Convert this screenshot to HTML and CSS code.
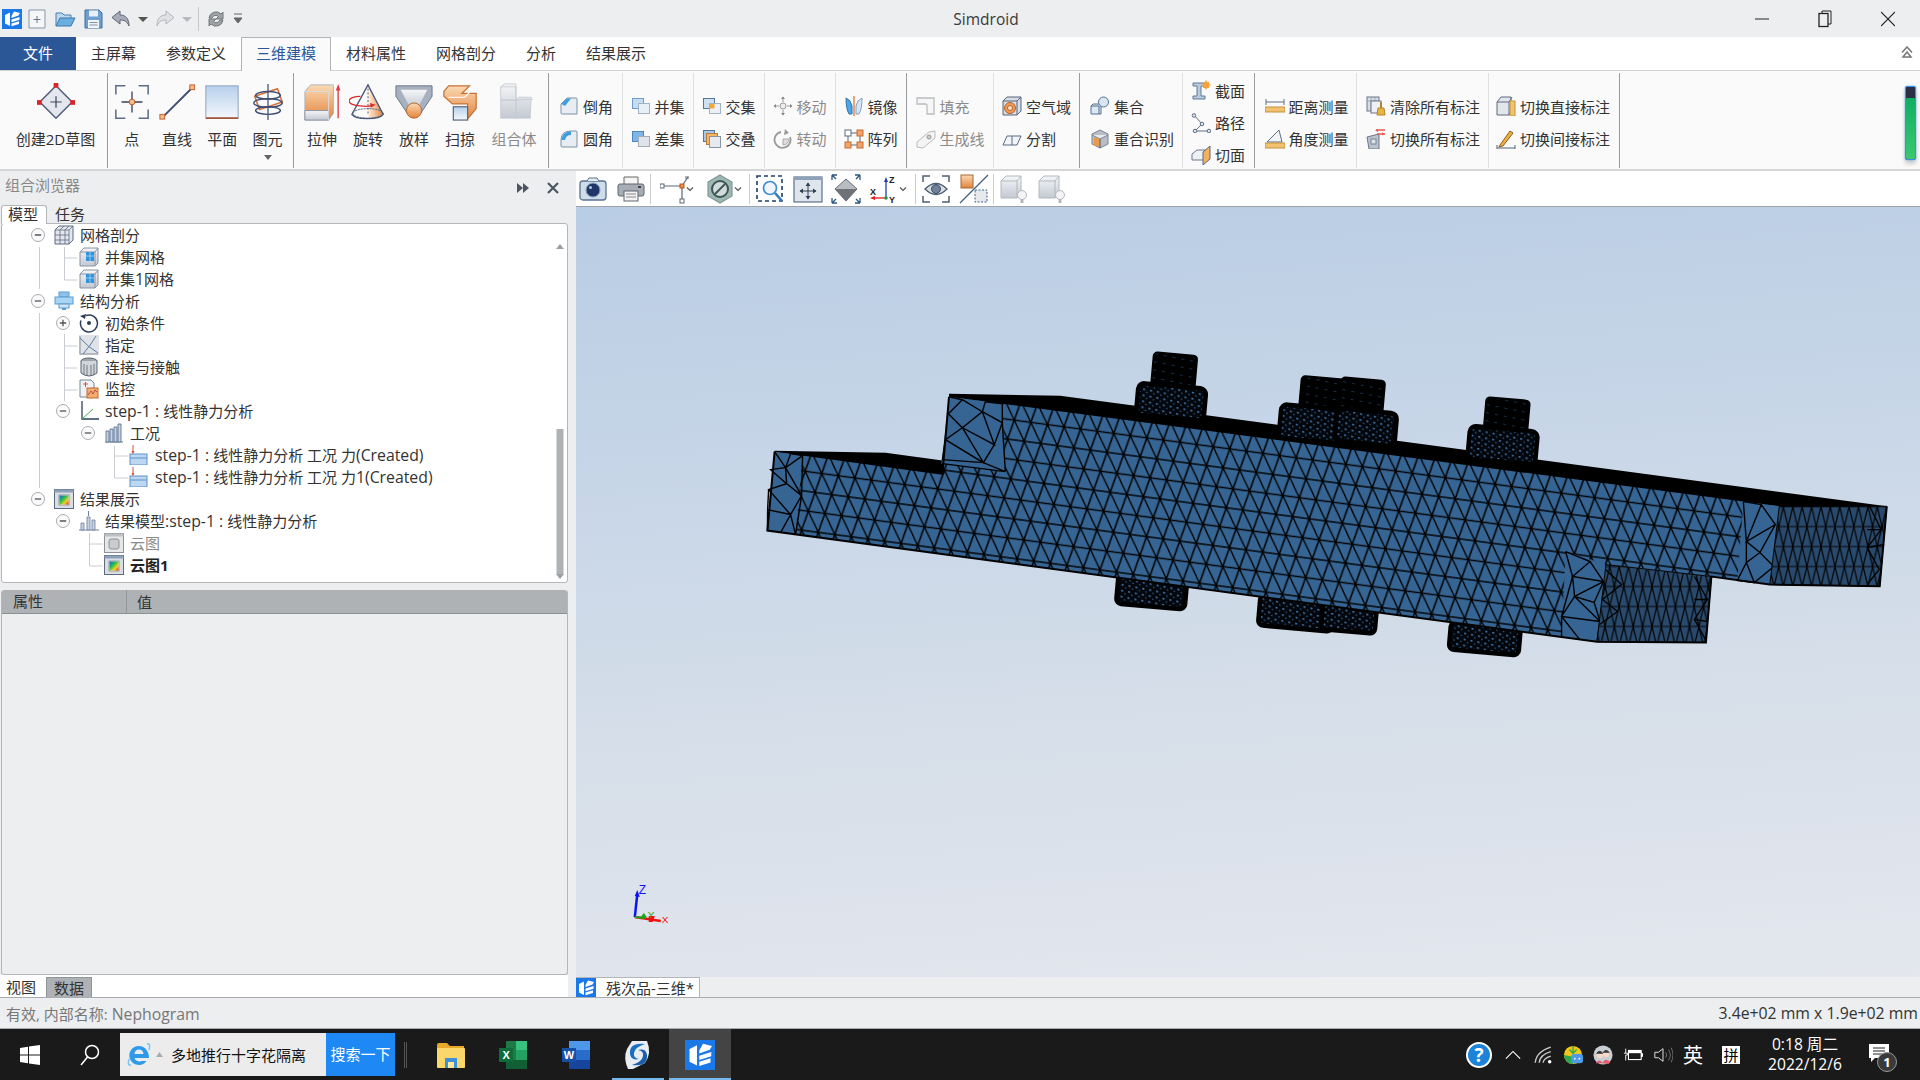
FILE: index.html
```html
<!DOCTYPE html>
<html lang="zh-CN">
<head>
<meta charset="utf-8">
<title>Simdroid</title>
<link rel="stylesheet" href="styles.css">
</head>
<body>
<svg class="defs" width="0" height="0" aria-hidden="true">
  <defs>
    <linearGradient id="gOrange" x1="0" y1="0" x2="0" y2="1"><stop offset="0" stop-color="#fbd9b5"/><stop offset="1" stop-color="#e2843a"/></linearGradient>
    <linearGradient id="gOrangeH" x1="0" y1="0" x2="1" y2="0"><stop offset="0" stop-color="#fff1e0"/><stop offset="1" stop-color="#e2843a"/></linearGradient>
    <linearGradient id="gBlue" x1="0" y1="0" x2="0" y2="1"><stop offset="0" stop-color="#b7d0ec"/><stop offset="1" stop-color="#f3f7fb"/></linearGradient>
    <linearGradient id="gGrey" x1="0" y1="0" x2="0" y2="1"><stop offset="0" stop-color="#f5f6f8"/><stop offset="1" stop-color="#c3c9d2"/></linearGradient>
    <linearGradient id="gRain" x1="0" y1="0" x2="1" y2="1"><stop offset="0" stop-color="#1b5fd8"/><stop offset=".4" stop-color="#22c04a"/><stop offset=".7" stop-color="#f4d31f"/><stop offset="1" stop-color="#e3261b"/></linearGradient>

    <symbol id="appLogo" viewBox="0 0 20 20">
      <rect width="20" height="20" fill="#1b78e8"/>
      <path fill="#fff" d="M3 6 8 3.500V17l-5-2.500zM9.500 7 12 2.500l6 1.500-1.500 2.500-7 2.500zM9.500 10.500l8-2.500v2.800l-8 2.500zM9.500 14.500l7.500-2.300V15l-7.500 2.300z"/>
    </symbol>
    <symbol id="tMinus" viewBox="0 0 16 16"><circle cx="8" cy="8" r="6.500" fill="#fafafa" stroke="#a8acb2"/><path d="M4.800 8h6.400" stroke="#555" stroke-width="1.300"/></symbol>
    <symbol id="tPlus" viewBox="0 0 16 16"><circle cx="8" cy="8" r="6.500" fill="#fafafa" stroke="#a8acb2"/><path d="M4.800 8h6.400M8 4.800v6.400" stroke="#555" stroke-width="1.300"/></symbol>
    <symbol id="tUnionMesh" viewBox="0 0 20 20"><path d="M1 5 5 1h14v15l-3 3H1z" fill="url(#gGrey)" stroke="#8a94a3"/><path d="M1 5h15v14M16 5l3-4" fill="none" stroke="#8a94a3"/><rect x="7" y="5" width="8" height="9" fill="#2f93dd"/><path d="M7 9h8M11 5v9" stroke="#bfe0f7" stroke-width=".7"/></symbol>
    <symbol id="tLoad" viewBox="0 0 20 20"><rect x="1" y="9" width="17" height="11" fill="#bcd7f1" stroke="#5d93c9"/><path d="M1 13h17" stroke="#5d93c9"/><path d="M4 0v8" stroke="#e04a3c"/><path d="M2.500 6 4 9l1.500-3z" fill="#e04a3c"/></symbol>
    <symbol id="tResult" viewBox="0 0 20 20"><rect x=".5" y=".5" width="19" height="19" fill="#d9dee4" stroke="#5d6b80"/><rect x=".5" y=".5" width="19" height="3" fill="#8ea0b8"/><rect x="5" y="6" width="10" height="10" fill="#fff" stroke="#666" stroke-width=".6"/><rect x="5.500" y="6.500" width="9" height="9" fill="url(#gRain)"/></symbol>
    <symbol id="bulbCube" viewBox="0 0 30 30"><path d="M2 7 7 2h15v18l-4 4H2z" fill="url(#gGrey)" stroke="#b4b8be"/><path d="M2 7h16v17M18 7l4-5" fill="none" stroke="#b4b8be"/><circle cx="23" cy="21" r="4.500" fill="#f4f4f4" stroke="#b4b8be"/><rect x="21.500" y="25" width="3" height="4" fill="#b4b8be"/></symbol>
    <symbol id="chev" viewBox="0 0 8 8"><path d="M1 2.500 4 5.500 7 2.500" fill="none" stroke="#555" stroke-width="1.200"/></symbol>

    <pattern id="mesh" width="16.600" height="40" patternUnits="userSpaceOnUse" x="766.800" y="428.250" patternTransform="matrix(1 .1334 .08 1 0 0)">
      <rect width="16.600" height="40" fill="#366493"/>
      <path d="M0 0H16.600M0 20H16.600M0 40H16.600M0 0 8.300 20 16.600 0M0 40 8.300 20 16.600 40" fill="none" stroke="#020202" stroke-width="1.450"/>
    </pattern>
    <pattern id="meshDark" width="9.400" height="40" patternUnits="userSpaceOnUse" x="1770" y="7">
      <rect width="9.400" height="40" fill="#294a6d"/>
      <path d="M0 0H9.400M0 20H9.400M0 40H9.400M0 0 4.700 20 9.400 0M0 40 4.700 20 9.400 40" fill="none" stroke="#020202" stroke-width="1.200"/>
    </pattern>
    <pattern id="fine" width="7" height="6" patternUnits="userSpaceOnUse" patternTransform="skewY(6)">
      <rect width="7" height="6" fill="#03060a"/>
      <rect x="1" y="1" width="2" height="1.600" fill="#3f78b4"/>
      <rect x="4.500" y="3.800" width="1.300" height="1.300" fill="#2f6499"/>
    </pattern>
    <pattern id="fineStud" width="9" height="8" patternUnits="userSpaceOnUse" patternTransform="skewY(6)">
      <rect width="9" height="8" fill="#000"/>
      <rect x="1" y="2" width="3" height=".8" fill="#1d3d5f"/>
    </pattern>
  </defs>
</svg>

<div class="app">
  <header class="titlebar">
    <div class="quick">
      <svg class="qlogo"><use href="#appLogo"/></svg>
      <svg class="qi" viewBox="0 0 22 22"><path d="M3 2h16v18H3z" fill="#f4f6f8" stroke="#8795a8"/><path d="M11 8v7M7.500 11.500h7" stroke="#6b7686"/></svg>
      <svg class="qi" viewBox="0 0 22 22"><path d="M2 18V5h6l2 2h7v3" fill="#bcd8ef" stroke="#4a7fb0"/><path d="M2 18 6 10h15l-4 8z" fill="#6aaee0" stroke="#3b77ab"/></svg>
      <svg class="qi" viewBox="0 0 22 22"><path d="M3 2h14l3 3v15H3z" fill="#6f9fd0" stroke="#3f6f9f"/><rect x="7" y="2.500" width="9" height="6" fill="#e9f0f7"/><rect x="6" y="12" width="11" height="8" fill="#f2f5f8"/><path d="M7.500 14.500h8M7.500 17h8" stroke="#7d93a9"/></svg>
      <svg class="qi" viewBox="0 0 22 22"><path d="M10 3 2 9.500l8 6.500v-4c4 0 7 1 9 6 0-7-3-11-9-11z" fill="#a6adb8" stroke="#5e6672"/></svg>
      <svg class="qarrow" viewBox="0 0 10 10"><path d="M0 3h10L5 8z" fill="#555"/></svg>
      <svg class="qi" viewBox="0 0 22 22"><path d="M12 3l8 6.500-8 6.500v-4c-4 0-7 1-9 6 0-7 3-11 9-11z" fill="#dfe1e4" stroke="#b3b6bb"/></svg>
      <svg class="qarrow" viewBox="0 0 10 10"><path d="M0 3h10L5 8z" fill="#b5b8bc"/></svg>
      <span class="qsep"></span>
      <svg class="qi" viewBox="0 0 22 22"><path d="M4 10a7 7 0 0 1 12-4l2-2v7h-7l2.500-2.500A4 4 0 0 0 7 10z" fill="#9ea3aa" stroke="#777"/><path d="M18 12a7 7 0 0 1-12 4l-2 2v-7h7l-2.500 2.500A4 4 0 0 0 15 12z" fill="#9ea3aa" stroke="#777"/></svg>
      <svg class="qcustom" viewBox="0 0 10 14"><path d="M1 2h8M1 6h8L5 11z" fill="#666" stroke="#666"/></svg>
    </div>
    <div class="apptitle">Simdroid</div>
    <div class="winctl">
      <span class="wbtn"><svg viewBox="0 0 14 14"><path d="M0 7h14" stroke="#222"/></svg></span>
      <span class="wbtn"><svg viewBox="0 0 14 18"><path d="M4 3V1h9v13h-3" fill="none" stroke="#222"/><rect x="1" y="3.500" width="9" height="13" fill="none" stroke="#222" stroke-width="1.300"/></svg></span>
      <span class="wbtn"><svg viewBox="0 0 14 14"><path d="M0 0l14 14M14 0 0 14" stroke="#222" stroke-width="1.100"/></svg></span>
    </div>
  </header>

  <nav class="tabs">
    <a class="tab file">文件</a>
    <a class="tab">主屏幕</a>
    <a class="tab">参数定义</a>
    <a class="tab active">三维建模</a>
    <a class="tab">材料属性</a>
    <a class="tab">网格剖分</a>
    <a class="tab">分析</a>
    <a class="tab">结果展示</a>
    <svg class="collapse" viewBox="0 0 12 12"><path d="M1 6.500 6 1l5 5.500M2 11l4-5 4 5z" fill="none" stroke="#777" stroke-width="1.500"/></svg>
  </nav>

  <section class="ribbon">
    <div class="grp dark g-sketch">
      <div class="big wide">
        <svg class="bi" viewBox="0 0 40 40"><path d="M20 3 37 20 20 37 3 20z" fill="#e4e7ed" stroke="#4d5b78" stroke-width="1.500"/><path d="M20 14v12M14 20h12" stroke="#3d4660" stroke-width="1.300"/><rect x="17.500" y="0" width="5" height="5" fill="#d9252a"/><rect x="0" y="18" width="5" height="5" fill="#d9252a"/><rect x="35" y="18" width="5" height="5" fill="#d9252a"/></svg>
        <span>创建2D草图</span>
      </div>
    </div>
    <div class="grp dark g-prim">
      <div class="big">
        <svg class="bi" viewBox="0 0 40 40"><path d="M3 12V3h10M27 3h10v9M37 28v9H27M13 37H3v-9" fill="none" stroke="#5c6c88" stroke-width="1.600"/><path d="M20 9v22M9 20h22" stroke="#39425c" stroke-width="1.400"/><circle cx="20" cy="20" r="3" fill="#f7bd8e" stroke="#c05a27"/></svg>
        <span>点</span>
      </div>
      <div class="big">
        <svg class="bi" viewBox="0 0 40 40"><path d="M5 36 36 5" stroke="#3e4e72" stroke-width="2"/><rect x="2" y="33" width="5" height="5" fill="#f6b98a" stroke="#c0632f"/><rect x="33.500" y="2" width="5" height="5" fill="#f6b98a" stroke="#c0632f"/></svg>
        <span>直线</span>
      </div>
      <div class="big">
        <svg class="bi" viewBox="0 0 40 40"><rect x="3" y="3" width="34" height="34" fill="url(#gBlue)" stroke="#8ba0ba"/><path d="M3 37h34" stroke="#a8563a" stroke-width="2"/></svg>
        <span>平面</span>
      </div>
      <div class="big">
        <svg class="bi" viewBox="0 0 40 40"><path d="M6 14 30 6l5 14-24 8z" fill="none" stroke="#d66f35" stroke-width="1.600"/><path d="M20 1v38" stroke="#3e4e72" stroke-width="1.300"/><ellipse cx="20" cy="13" rx="13" ry="4" fill="none" stroke="#3e4e72" stroke-width="1.500"/><ellipse cx="20" cy="21" rx="15" ry="4.500" fill="none" stroke="#3e4e72" stroke-width="1.500"/><ellipse cx="20" cy="29" rx="13" ry="4" fill="none" stroke="#3e4e72" stroke-width="1.500"/></svg>
        <span>图元</span>
        <svg class="drop" viewBox="0 0 10 6"><path d="M1 0h8L5 5z" fill="#666"/></svg>
      </div>
    </div>
    <div class="grp dark g-solid">
      <div class="big">
        <svg class="bi" viewBox="0 0 40 40"><path d="M2 9 8 2h24v30l-5 7H2z" fill="url(#gOrange)" stroke="#aab3bf"/><path d="M2 29h25v10H2z" fill="url(#gGrey)" stroke="#8b95a3"/><path d="M27 9v30M2 9h25M27 9l5-7" stroke="#d8dde3" fill="none"/><path d="M37 37V6" stroke="#e04146" stroke-width="1.500"/><path d="M34.500 8 37 1l2.500 7z" fill="#e04146"/></svg>
        <span>拉伸</span>
      </div>
      <div class="big">
        <svg class="bi" viewBox="0 0 40 40"><path d="M20 2 36 33a16 6 0 0 1-16 5z" fill="url(#gOrangeH)"/><path d="M20 2 3 33a17 6 0 0 0 33 0z" fill="none" stroke="#47577a" stroke-width="1.400"/><ellipse cx="20" cy="32" rx="16" ry="5" fill="none" stroke="#47577a" stroke-dasharray="2 1"/><path d="M20 2v30" stroke="#47577a" stroke-dasharray="2 2"/><path d="M12 14a12 5 0 0 0 0 10 14 5 0 0 0 12 0" fill="none" stroke="#d92b2b" stroke-width="1.300"/><path d="M22 21l6 2-5 3z" fill="#d92b2b"/></svg>
        <span>旋转</span>
      </div>
      <div class="big">
        <svg class="bi" viewBox="0 0 40 40"><path d="M1 3h38v11L27 32a8 6 0 0 1-14 0L1 14z" fill="#a8b1bf" stroke="#69758a"/><path d="M6 7h28L24 26h-8z" fill="url(#gGrey)"/><ellipse cx="20" cy="29" rx="8" ry="8" fill="url(#gOrange)" stroke="#b5622a"/></svg>
        <span>放样</span>
      </div>
      <div class="big">
        <svg class="bi" viewBox="0 0 40 40"><path d="M8 3h22l-8 8h15v16l-9 11V22H12L3 14V9z" fill="url(#gOrange)" stroke="#c67335" stroke-width="1.300"/><path d="M8 15h17l5-5" fill="none" stroke="#fff" stroke-width="1.200"/><rect x="13" y="25" width="15" height="14" fill="url(#gBlue)" stroke="#5d6b80" stroke-width="1.300"/></svg>
        <span>扫掠</span>
      </div>
      <div class="big combo">
        <svg class="bi" viewBox="0 0 40 40"><path d="M6 4 10 1h12v17H6zM6 18h16v19H6zM22 18l3-3h13l-1 22H22z" fill="url(#gGrey)" stroke="#c8ccd2"/><path d="M6 4h16v14l18-1" fill="none" stroke="#c8ccd2"/></svg>
        <span class="off">组合体</span>
      </div>
    </div>

    <div class="grp light g-blend">
      <div class="sm"><svg class="si" viewBox="0 0 20 20"><path d="M2 8 8 2h9q1 0 1 1v15H3q-1 0-1-1z" fill="#e8edf3" stroke="#7d90a6"/><path d="M2.500 8 8 2.500h4L6 10z" fill="#3c9ee2"/></svg><span>倒角</span></div>
      <div class="sm"><svg class="si" viewBox="0 0 20 20"><path d="M2 11Q2 2 12 2h5q1 0 1 1v15H3q-1 0-1-1z" fill="#e8edf3" stroke="#7d90a6"/><path d="M2.500 11Q3 2.500 12 2.500V6Q7 6 6 11z" fill="#3c9ee2"/></svg><span>圆角</span></div>
    </div>
    <div class="grp light g-bool">
      <div class="sm"><svg class="si" viewBox="0 0 20 20"><rect x="1.500" y="2.500" width="11" height="10" fill="#c5dcf3" stroke="#6f9cca"/><rect x="7.500" y="7.500" width="11" height="10" fill="#e9eff6" stroke="#a3b3c6"/></svg><span>并集</span></div>
      <div class="sm"><svg class="si" viewBox="0 0 20 20"><rect x="1.500" y="2.500" width="11" height="10" fill="#7fb6ea" stroke="#4f86bd"/><rect x="7.500" y="7.500" width="11" height="10" fill="#dfe4ea" stroke="#a3adb9"/></svg><span>差集</span></div>
    </div>
    <div class="grp light g-bool">
      <div class="sm"><svg class="si" viewBox="0 0 20 20"><rect x="1.500" y="2.500" width="11" height="10" fill="#cfe0f2" stroke="#55779c"/><rect x="7.500" y="7.500" width="11" height="10" fill="#ecf0f5" stroke="#a3b3c6"/><rect x="8" y="8" width="4.500" height="4.500" fill="#f3a83c"/></svg><span>交集</span></div>
      <div class="sm"><svg class="si" viewBox="0 0 20 20"><rect x="1.500" y="1.500" width="11" height="11" fill="#a9c8e8" stroke="#55779c"/><rect x="4.500" y="4.500" width="11" height="11" fill="#f3b468" stroke="#b97b35"/><rect x="7.500" y="7.500" width="11" height="11" fill="#e6eaef" stroke="#8a95a3"/></svg><span>交叠</span></div>
    </div>
    <div class="grp light g-bool">
      <div class="sm"><svg class="si" viewBox="0 0 20 20"><circle cx="10" cy="10" r="3" fill="#eee" stroke="#999"/><path d="M10 1v5M10 14v5M1 10h5M14 10h5" stroke="#999"/><path d="M8 3l2-2.500L12 3zM8 17l2 2.500 2-2.500zM3 8 .5 10 3 12zM17 8l2.500 2-2.500 2z" fill="#888"/></svg><span class="off">移动</span></div>
      <div class="sm"><svg class="si" viewBox="0 0 20 20"><path d="M8 3A8 8 0 1 0 17 8" fill="none" stroke="#999" stroke-width="1.800"/><path d="M12 0l4 4-5 2z" fill="#999"/><path d="M10 10h6a6 6 0 0 1-6 6z" fill="#ddd" stroke="#aaa"/></svg><span class="off">转动</span></div>
    </div>
    <div class="grp dark g-bool">
      <div class="sm"><svg class="si" viewBox="0 0 20 20"><path d="M2 2q5 2 6 8v8H5Q2 13 2 2z" fill="#4ea6e6" stroke="#2f74ad"/><path d="M18 2q-5 2-6 8v8h3Q18 13 18 2z" fill="#d7e7f5" stroke="#7fa1c0"/><path d="M10 0v20" stroke="#e2733f" stroke-width="1.300"/></svg><span>镜像</span></div>
      <div class="sm"><svg class="si" viewBox="0 0 20 20"><path d="M4 4h12v12H4z" fill="none" stroke="#5b6a80"/><rect x="1" y="1" width="6" height="6" fill="#fff" stroke="#5b6a80"/><rect x="13" y="1" width="6" height="6" fill="#f3a368" stroke="#c46c30"/><rect x="1" y="13" width="6" height="6" fill="#f3a368" stroke="#c46c30"/><rect x="13" y="13" width="6" height="6" fill="#f3a368" stroke="#c46c30"/></svg><span>阵列</span></div>
    </div>
    <div class="grp light g-fill">
      <div class="sm"><svg class="si" viewBox="0 0 20 20"><path d="M1 2h17v16h-7v-9Q11 8 9 8H1z" fill="#f6f6f6" stroke="#b9bcc0" stroke-width="1.300"/></svg><span class="off">填充</span></div>
      <div class="sm"><svg class="si" viewBox="0 0 20 20"><path d="M1 13 13 3l6-1v7L7 19l-6-1z" fill="#f4f4f4" stroke="#bbb"/><circle cx="13" cy="8" r="2" fill="#ccc" stroke="#999"/></svg><span class="off">生成线</span></div>
    </div>
    <div class="grp dark g-air">
      <div class="sm"><svg class="si" viewBox="0 0 20 20"><path d="M1 5l4-4h14v14l-4 4H1z" fill="#d8dee6" stroke="#56647a"/><path d="M1 5h14v14M15 5l4-4" fill="none" stroke="#56647a"/><circle cx="8" cy="12" r="5.500" fill="#ef9a58" stroke="#b9622a"/><circle cx="8" cy="12" r="2.500" fill="#f7e3cf" stroke="#b9622a"/></svg><span>空气域</span></div>
      <div class="sm"><svg class="si" viewBox="0 0 20 20"><path d="M1 16 5 7h14l-4 9z" fill="#f2f5f8" stroke="#5a6a82"/><path d="M10 7v9" stroke="#5a6a82"/></svg><span>分割</span></div>
    </div>
    <div class="grp light g-set">
      <div class="sm"><svg class="si" viewBox="0 0 20 20"><path d="M1 10l2-2h8v10H1z" fill="#dce8f3" stroke="#55708f"/><path d="M1 10h8v8" fill="none" stroke="#55708f"/><circle cx="13.500" cy="6" r="5" fill="#d9e6f2" stroke="#55708f"/></svg><span>集合</span></div>
      <div class="sm"><svg class="si" viewBox="0 0 20 20"><path d="M10 1l8 4v10l-8 4-8-4V5z" fill="#b7bec8" stroke="#7b8491"/><path d="M2 6l8 4 8-4" fill="#e6e9ed" stroke="#7b8491"/><rect x="4" y="9" width="5" height="8" fill="#e99a4a"/><path d="M10 10v9" stroke="#555"/></svg><span>重合识别</span></div>
    </div>
    <div class="grp dark g-sec">
      <div class="sm"><svg class="si" viewBox="0 0 20 20"><path d="M2 3h12v3h-4v10h4v3H2v-3h4V6H2z" fill="#b9cbdd" stroke="#5d7a99"/><circle cx="15" cy="5" r="3.500" fill="#f5a23c"/><path d="M15 0v10M10 5h10M12 2l6 6M18 2l-6 6" stroke="#f5a23c" stroke-width=".8"/></svg><span>截面</span></div>
      <div class="sm"><svg class="si" viewBox="0 0 20 20"><path d="M3 2l8 9-7 7h14" fill="none" stroke="#5d6e85"/><circle cx="3" cy="2.500" r="1.800" fill="#dde6ee" stroke="#5d6e85"/><circle cx="11" cy="11" r="1.800" fill="#dde6ee" stroke="#5d6e85"/><circle cx="4" cy="18" r="1.800" fill="#dde6ee" stroke="#5d6e85"/><circle cx="18" cy="18" r="1.800" fill="#dde6ee" stroke="#5d6e85"/></svg><span>路径</span></div>
      <div class="sm"><svg class="si" viewBox="0 0 20 20"><path d="M1 9l5-4h9v10H1z" fill="#eef1f5" stroke="#6b7990"/><path d="M12 7l7-6v13l-7 6z" fill="#f2b15c" stroke="#5b6a80"/></svg><span>切面</span></div>
    </div>
    <div class="grp light g-meas">
      <div class="sm"><svg class="si" viewBox="0 0 20 20"><path d="M1 6h18M1 3v6M19 3v6" stroke="#5d6e85"/><rect x="0" y="11" width="20" height="5" fill="#f2c26e" stroke="#c7923f"/></svg><span>距离测量</span></div>
      <div class="sm"><svg class="si" viewBox="0 0 20 20"><path d="M14 1 2 13h15z" fill="#f2f4f7" stroke="#5d6e85"/><rect x="0" y="14" width="20" height="5" fill="#f2c26e" stroke="#c7923f"/></svg><span>角度测量</span></div>
    </div>
    <div class="grp light g-mark1">
      <div class="sm"><svg class="si" viewBox="0 0 20 20"><rect x="1" y="1" width="12" height="14" fill="#d9dde3" stroke="#6a7687"/><path d="M1 5h12M5 1v14M9 1v14" stroke="#8f99a7" stroke-width=".7"/><rect x="5" y="5" width="10" height="12" fill="#eef0f3" stroke="#6a7687"/><path d="M15 6v6" stroke="#b2852f" stroke-width="2"/><path d="M12 12h6l1 7h-8z" fill="#eab53f" stroke="#b2852f"/></svg><span>清除所有标注</span></div>
      <div class="sm"><svg class="si" viewBox="0 0 20 20"><path d="M1 8l12-3v15H3z" fill="#b9c3ce" stroke="#6a7687"/><rect x="5" y="10" width="5" height="5" fill="#dde2e8" stroke="#78848f"/><path d="M10 1h9M19 5h-8" stroke="#e85a52" stroke-width="1.300"/><path d="M12 0 9 1.500 12 3zM16 3.500 19 5l-3 1.500z" fill="#e85a52"/></svg><span>切换所有标注</span></div>
    </div>
    <div class="grp dark g-mark2">
      <div class="sm"><svg class="si" viewBox="0 0 20 20"><path d="M1 6l4-5h10v14l-2 4H1z" fill="#e2e6eb" stroke="#5d6b80"/><path d="M1 6h12v13M13 6l3-5" fill="none" stroke="#5d6b80"/><rect x="14" y="5" width="5" height="15" fill="#f2c26e" stroke="#c7923f"/></svg><span>切换直接标注</span></div>
      <div class="sm"><svg class="si" viewBox="0 0 20 20"><path d="M1 19h18M1 16v5M19 16v5" stroke="#56647a"/><path d="M4 16 14 2l3 2L7 17l-4 1z" fill="#f0b040" stroke="#8a5f1d"/></svg><span>切换间接标注</span></div>
    </div>
    <div class="meter"><div class="meter-fill"></div></div>
  </section>

  <main class="work">
    <aside class="dock">
      <div class="dock-head">
        <span class="dock-title">组合浏览器</span>
        <svg class="dock-ic" viewBox="0 0 14 14"><path d="M1 2l6 5-6 5zM7 2l6 5-6 5z" fill="#4d5560"/></svg>
        <svg class="dock-ic" viewBox="0 0 14 14"><path d="M2 2l10 10M12 2 2 12" stroke="#4d5560" stroke-width="2.200"/></svg>
      </div>
      <div class="dock-tabs">
        <span class="dtab on">模型</span>
        <span class="dtab">任务</span>
      </div>
      <div class="tree">
        <div class="row lv0"><svg class="exp"><use href="#tMinus"/></svg><svg class="ti" viewBox="0 0 20 20"><path d="M1 5 5 1h14v14l-4 4H1z" fill="#e4e8ed" stroke="#5d6b80"/><path d="M1 5h14v14M15 5l4-4M6 5v14M11 5v14M1 10h14M1 15h14M6 5l4-4M11 5l4-4" fill="none" stroke="#5d6b80" stroke-width=".8"/></svg><span class="lbl">网格剖分</span></div>
        <div class="row lv1"><span class="exp"></span><svg class="ti"><use href="#tUnionMesh"/></svg><span class="lbl">并集网格</span></div>
        <div class="row lv1"><span class="exp"></span><svg class="ti"><use href="#tUnionMesh"/></svg><span class="lbl">并集<span class="lat">1</span>网格</span></div>
        <div class="row lv0"><svg class="exp"><use href="#tMinus"/></svg><svg class="ti" viewBox="0 0 20 20"><rect x="5" y="1" width="10" height="5" fill="#8ec3ee" stroke="#5a9bd1"/><rect x="1" y="6" width="18" height="7" fill="#a9d4f4" stroke="#5a9bd1"/><rect x="5" y="13" width="10" height="4" fill="#cfe5f7" stroke="#5a9bd1"/><path d="M8 17h4v2H8z" fill="#5a9bd1"/></svg><span class="lbl">结构分析</span></div>
        <div class="row lv1"><svg class="exp"><use href="#tPlus"/></svg><svg class="ti" viewBox="0 0 20 20"><path d="M7 2.500a8.500 8.500 0 1 1-5 5" fill="none" stroke="#2e3f5c" stroke-width="1.500"/><path d="M1 3l6-2-1 5z" fill="#2e3f5c"/><circle cx="10" cy="10" r="2" fill="#2e3f5c"/></svg><span class="lbl">初始条件</span></div>
        <div class="row lv1"><span class="exp"></span><svg class="ti" viewBox="0 0 20 20"><rect width="20" height="20" fill="#dfe3e8"/><path d="M1 1v18h18" fill="none" stroke="#8791a0"/><path d="M1 3q8 9 18 15M17 1Q12 10 4 19" fill="none" stroke="#5d7da3"/></svg><span class="lbl">指定</span></div>
        <div class="row lv1"><span class="exp"></span><svg class="ti" viewBox="0 0 20 20"><ellipse cx="10" cy="4" rx="8" ry="3" fill="#9aa6b0" stroke="#5a6570"/><path d="M2 4v12q8 6 16 0V4" fill="#cfd5da" stroke="#5a6570"/><path d="M5 7v11M8 8v11M12 8v11M15 7v11" stroke="#5a6570" stroke-width=".8"/></svg><span class="lbl">连接与接触</span></div>
        <div class="row lv1"><span class="exp"></span><svg class="ti" viewBox="0 0 20 20"><path d="M1 1h11l3 3v14H1z" fill="#eef1f5" stroke="#7b8796"/><path d="M4 5h5M6.500 3v5" stroke="#d4582f"/><rect x="8" y="9" width="11" height="10" fill="#f2ab70" stroke="#c06d2c"/><path d="M9 16l3-4 2 3 2-4 2 2" fill="none" stroke="#a33" stroke-width=".8"/></svg><span class="lbl">监控</span></div>
        <div class="row lv1"><svg class="exp"><use href="#tMinus"/></svg><svg class="ti" viewBox="0 0 20 20"><path d="M3 0v18h17" fill="none" stroke="#2e3f5c" stroke-width="1.300"/><path d="M3 18 14 8" stroke="#3bab4b"/></svg><span class="lbl"><span class="lat">step-1 : </span>线性静力分析</span></div>
        <div class="row lv2"><svg class="exp"><use href="#tMinus"/></svg><svg class="ti" viewBox="0 0 20 20"><path d="M1 19h18" stroke="#6d7f99"/><path d="M2 8h3v11H2zM6 6h3v13H6zM10 4h3v15h-3zM14 1h3v18h-3z" fill="#c5d3e4" stroke="#4f6485" stroke-width=".8"/></svg><span class="lbl">工况</span></div>
        <div class="row lv3"><span class="exp"></span><svg class="ti"><use href="#tLoad"/></svg><span class="lbl"><span class="lat">step-1 : </span>线性静力分析 工况 力<span class="lat">(Created)</span></span></div>
        <div class="row lv3"><span class="exp"></span><svg class="ti"><use href="#tLoad"/></svg><span class="lbl"><span class="lat">step-1 : </span>线性静力分析 工况 力<span class="lat">1(Created)</span></span></div>
        <div class="row lv0"><svg class="exp"><use href="#tMinus"/></svg><svg class="ti"><use href="#tResult"/></svg><span class="lbl">结果展示</span></div>
        <div class="row lv1"><svg class="exp"><use href="#tMinus"/></svg><svg class="ti" viewBox="0 0 20 20"><path d="M0 19h20" stroke="#6d7f99"/><path d="M2 12h3v7H2zM8 6h3v13H8zM13 9h3v10h-3z" fill="#c5d3e4" stroke="#6d7f99" stroke-width=".8"/><path d="M9.500 0v5" stroke="#6d7f99"/></svg><span class="lbl">结果模型<span class="lat">:step-1 : </span>线性静力分析</span></div>
        <div class="row lv2"><span class="exp"></span><svg class="ti" viewBox="0 0 20 20"><rect x=".5" y=".5" width="19" height="19" fill="#e6e7e9" stroke="#8e9297"/><rect x=".5" y=".5" width="19" height="3" fill="#bcc0c5"/><rect x="5" y="6" width="10" height="10" rx="2" fill="#c9cbce" stroke="#8e9297"/></svg><span class="lbl off">云图</span></div>
        <div class="row lv2"><span class="exp"></span><svg class="ti"><use href="#tResult"/></svg><b class="lbl">云图1</b></div>
        <svg class="guides" viewBox="1 223 567 360"><path d="M38.500 246v42M38.500 312v175M63.500 246v33h13M63.500 257h13M63.500 333v67M63.500 345h13M63.500 367h13M63.500 389h13M113.500 445v32h14M113.500 455h14M88.500 532v33h13M88.500 543h13" fill="none" stroke="#c9ccd0"/></svg>
        <svg class="tscroll" viewBox="0 0 10 360"><path d="M1 25h8L5 20z" fill="#9a9fa5"/><rect x="1.500" y="205" width="7" height="145" fill="#aeb2b5"/><path d="M1 350h8l-4 5z" fill="#9a9fa5"/></svg>
      </div>
      <div class="props">
        <div class="props-head"><span class="pcol">属性</span><span class="pcol2">值</span></div>
      </div>
      <div class="dock-bottom">
        <span class="btab">视图</span>
        <span class="btab on">数据</span>
      </div>
    </aside>

    <section class="view">
      <div class="toolbar">
        <div class="tbg first">
          <svg class="tb" viewBox="0 0 30 30"><rect x="2" y="7" width="26" height="19" rx="3" fill="#cfdcea" stroke="#5a7391" stroke-width="1.300"/><path d="M9 7l2-3h8l2 3" fill="#e4ecf4" stroke="#5a7391"/><circle cx="15" cy="16" r="7" fill="#1f3768" stroke="#8ea5c0"/><circle cx="12.500" cy="13.500" r="1.500" fill="#b6c9e2"/></svg>
          <svg class="tb" viewBox="0 0 30 30"><path d="M8 10V3h14v7" fill="#f5f5f5" stroke="#666"/><rect x="2" y="10" width="26" height="12" rx="2" fill="#a7adb4" stroke="#5f6670"/><rect x="8" y="17" width="14" height="10" fill="#f2f3f4" stroke="#5f6670"/><path d="M10 20h10M10 23h10" stroke="#888"/><rect x="22" y="12" width="3" height="2" fill="#444"/></svg>
        </div>
        <span class="tsep"></span>
        <div class="tbg pl9">
          <svg class="tb" viewBox="0 0 30 30"><path d="M2 12h20v15M22 12 28 3" fill="none" stroke="#5d6876" stroke-width="1.200"/><rect x="0" y="10" width="4" height="4" fill="#fff" stroke="#5d6876"/><rect x="20" y="10" width="4" height="4" fill="#f08a3c" stroke="#b85c20"/><rect x="20" y="25" width="4" height="4" fill="#fff" stroke="#5d6876"/><path d="M26 2v3M28 2v3" stroke="#5d6876"/></svg>
          <svg class="tchev"><use href="#chev"/></svg>
          <svg class="tb hex" viewBox="0 0 30 30"><path d="M15 1l12 7v14l-12 7-12-7V8z" fill="#9fb7b4" stroke="#7d9997" stroke-width="1.200"/><circle cx="15" cy="15" r="8" fill="#d0dcdb" stroke="#3e5653" stroke-width="2"/><path d="M10 20 20 10" stroke="#3e5653" stroke-width="2"/></svg>
          <svg class="tchev"><use href="#chev"/></svg>
        </div>
        <span class="tsep"></span>
        <div class="tbg pl5 pr8">
          <svg class="tb" viewBox="0 0 30 30"><rect x="2" y="2" width="25" height="25" fill="none" stroke="#1f3e66" stroke-width="1.600" stroke-dasharray="4 3"/><circle cx="15" cy="14" r="6.500" fill="#f0f5fa" stroke="#3f8fd0" stroke-width="1.700"/><path d="M20 19l7 8" stroke="#2d7cc0" stroke-width="2.500"/></svg>
          <svg class="tb" viewBox="0 0 30 30"><rect x="1" y="3" width="28" height="25" fill="#dfe5ec" stroke="#3e5876"/><rect x="1" y="3" width="28" height="3" fill="#8da2ba"/><path d="M15 9v16M7 17h16" stroke="#2f3d52"/><path d="M12.500 12 15 8.500l2.500 3.500zM12.500 22 15 25.500l2.500-3.500zM10 14.500 6.500 17l3.500 2.500zM20 14.500l3.500 2.500-3.500 2.500z" fill="#2f3d52"/></svg>
          <svg class="tb" viewBox="0 0 30 30"><path d="M15 5 26 15 15 27 4 15z" fill="#b9bdc3" stroke="#666b73"/><path d="M4 15h22L15 27z" fill="#6d7279"/><path d="M1 1h5M1 1v5M29 1h-5M29 1v5M1 29h5M1 29v-5M29 29h-5M29 29v-5M1 1l4 4M29 1l-4 4M1 29l4-4M29 29l-4-4" stroke="#2c567f" stroke-width="1.300"/></svg>
          <svg class="tb axes" viewBox="0 0 34 30"><path d="M17 24V6" stroke="#1f3fb0" stroke-width="1.300"/><path d="M15 8l2-5 2 5z" fill="#1f3fb0"/><path d="M17 24H4" stroke="#e01d1d" stroke-width="1.300"/><path d="M6 22l-5 2 5 2z" fill="#e01d1d"/><circle cx="17" cy="24" r="1.800" fill="#1f9a3a"/><text x="20" y="9" class="axl">Z</text><text x="1" y="21" class="axl">X</text><text x="20" y="29" class="axl">Y</text></svg>
          <svg class="tchev"><use href="#chev"/></svg>
        </div>
        <span class="tsep"></span>
        <div class="tbg pl5 pr4">
          <svg class="tb" viewBox="0 0 30 30"><path d="M2 8V2h7M21 2h7v6M28 22v6h-7M9 28H2v-6" fill="none" stroke="#4f5f72" stroke-width="1.500"/><path d="M4 15q11-11 22 0-11 11-22 0z" fill="#d8e0e8" stroke="#4f5f72" stroke-width="1.300"/><circle cx="15" cy="15" r="4.500" fill="#6f8099" stroke="#3f4d60"/></svg>
          <svg class="tb" viewBox="0 0 30 30"><rect x="2" y="1" width="12" height="13" fill="url(#gOrange)" stroke="#a86636"/><path d="M1 29 29 1" stroke="#44617f" stroke-width="1.300"/><rect x="16" y="16" width="12" height="12" fill="#e6eaef" stroke="#44617f" stroke-dasharray="2 1.500"/></svg>
        </div>
        <span class="tsep"></span>
        <div class="tbg pl5">
          <svg class="tb"><use href="#bulbCube"/></svg>
          <svg class="tb"><use href="#bulbCube"/></svg>
        </div>
      </div>

      <div class="canvas">
        <svg class="scene" viewBox="576 207 1344 770">
          <g>
            <rect class="stud" x="1152" y="354" width="44" height="36" rx="4" transform="rotate(5 1174 372)"/>
            <rect class="stud" x="1300" y="378" width="48" height="38" rx="4" transform="rotate(5 1324 397)"/>
            <rect class="stud" x="1340" y="379" width="44" height="38" rx="4" transform="rotate(5 1362 398)"/>
            <rect class="stud" x="1485" y="399" width="44" height="36" rx="4" transform="rotate(5 1507 417)"/>
          </g>
          <path class="topface" d="M948.600 394 1060 396 1887.600 506.700 1780 509 948.600 399zM774 451 885 453 944 461 942 477 774 454z"/>
          <g>
            <rect class="nut" x="1137" y="386" width="68" height="32" rx="6" transform="rotate(5 1171 402)"/>
            <rect class="nut" x="1280" y="407" width="62" height="34" rx="6" transform="rotate(5 1311 424)"/>
            <rect class="nut" x="1336" y="411" width="60" height="33" rx="6" transform="rotate(5 1366 428)"/>
            <rect class="nut" x="1469" y="429" width="68" height="33" rx="6" transform="rotate(5 1503 445)"/>
            <rect class="nut" x="1117" y="575" width="69" height="32" rx="5" transform="rotate(5 1151 592)"/>
            <rect class="nut" x="1259" y="598" width="74" height="31" rx="5" transform="rotate(5 1296 615)"/>
            <rect class="nut" x="1322" y="604" width="54" height="28" rx="5" transform="rotate(5 1349 619)"/>
            <rect class="nut" x="1450" y="625" width="70" height="28" rx="5" transform="rotate(5 1485 640)"/>
          </g>
          <path class="face" d="M774 452 766.800 531 1597.400 642.300 1606.400 565 1712 577 1770.500 585 1780 506.700 948.600 397 942 475z"/>
          <path class="patch" d="M774 452 802 456 795 535 766.800 531z"/>
          <path class="wire" d="M774 452 785 468 790 454 802 456 785 468 801 496 786 484 785 468 770 470 786 484 768 490 790 515 801 496 802 456M768 490 767 510 790 515 780 533M767 510 766.800 531M790 515 795 535M802 456 801 496 795 535"/>
          <path class="patch" d="M948.600 397 1002 404 1005 472 941 464z"/>
          <path class="wire" d="M948.600 397 962 400 982 412 1002 423 1002 404M962 400 948 414 962 428 982 412 994 445 962 428 945 440 983 463 994 445 1002 423M945 440 942 460 983 463 1005 472M982 412 985 402M962 428 983 463M942 464 1005 472M1002 423 1005 472M1002 404 985 402"/>
          <path class="patch" d="M1566 552 1606 565 1597.400 642.300 1562 637z"/>
          <path class="wire" d="M1566 552 1590.600 562 1573 577 1604 582 1590.600 562M1573 577 1575 597 1604 582 1594.600 603 1575 597 1600.500 622 1594.600 603M1575 597 1562 617 1600.500 622M1562 617 1580 640M1600.500 622 1597.400 642.300M1566 552 1573 577 1562 617 1562 637"/>
          <path class="patch" d="M1744 502 1780 506.700 1770.500 585 1738 581z"/>
          <path class="wire" d="M1762 505 1776 525 1747 542 1762 505 1744 502M1776 525 1760.600 553 1747 542 1747 563 1760.600 553 1774.500 567 1755 583 1747 563 1738 581 1755 583M1744 502 1747 542"/>
          <path class="darkface" d="M1780 506.700 1887.600 506.700 1880.500 586.700 1770.500 585z"/>
          <path class="darkface" d="M1606.400 565 1712 577 1706.500 643 1597.400 642.300z"/>
          <path class="wire" d="M1870 506 1882 530 1868 548 1880 570 1868 585M1882 530 1868 530M1868 548 1885 545M1695 577 1708 600 1695 620 1706 640M1708 600 1695 600M1695 620 1708 622M1606 570 1622 585 1603 600 1618 612 1600 625"/>
          <path class="outline" d="M774 452 766.800 531 1597.400 642.300 1706.500 643 1712 577 1770.500 585 1880.500 586.700 1887.600 506.700M948.600 397 942 475"/>
          <g class="triad">
            <path d="M634 918 636.500 895" stroke="#0a14f0" stroke-width="2.500"/>
            <path d="M634 897l2.500-6 2.500 7z" fill="#0a14f0"/>
            <path d="M634 918 660 922" stroke="#f01010" stroke-width="2.500"/>
            <path d="M648 917h6l-2 6h-4z" fill="#f01010"/>
            <path d="M634 918 645 919" stroke="#18a818" stroke-width="2"/>
            <path d="M640 918l3-4 3 4z" fill="#18a818"/>
            <text class="tx tz" x="638" y="895">Z</text>
            <text class="tx tyy" x="647" y="919">Y</text>
            <text class="tx tr" x="661" y="924">X</text>
          </g>
        </svg>
      </div>

      <div class="doc-tabs">
        <div class="doc-tab"><svg class="doc-ic"><use href="#appLogo"/></svg><span>残次品-三维*</span></div>
      </div>
    </section>
  </main>

  <footer class="status">
    <span class="status-l">有效, 内部名称: <span class="lat">Nephogram</span></span>
    <span class="status-r">3.4e+02 mm x 1.9e+02 mm</span>
  </footer>

  <div class="taskbar">
    <span class="tk start"><svg viewBox="0 0 22 22"><path fill="#fff" d="M1 4l8-1.200V10.500H1zM10 2.600 21 1v9.500H10zM1 11.500h8v7.700L1 18zM10 11.500h11V21l-11-1.600z"/></svg></span>
    <span class="tk search"><svg viewBox="0 0 22 22"><circle cx="13" cy="8" r="6.500" fill="none" stroke="#fff" stroke-width="1.500"/><path d="M8.500 13 2 21" stroke="#fff" stroke-width="1.500"/></svg></span>
    <div class="newsbox">
      <svg class="ie" viewBox="0 0 24 26"><path d="M12 4a9.500 9.500 0 0 0-9 13 9.500 9.500 0 0 0 16.500 2h-5a5 5 0 0 1-7-3H22c0-7-4-12-10-12zM7.500 12a4.500 4.500 0 0 1 9 0z" fill="#2e9ae8"/><path d="M20 2q4-1 2 6M4 23q-4 1-2-6" fill="none" stroke="#7cc2f2" stroke-width="1.500"/></svg>
      <svg class="ie-up" viewBox="0 0 8 6"><path d="M0 6h8L4 0z" fill="#aaa"/></svg>
      <span class="news">多地推行十字花隔离</span>
      <span class="newsbtn">搜索一下</span>
    </div>
    <span class="tksep"></span>
    <span class="tapp">
      <svg viewBox="0 0 30 30"><path d="M1 5a2 2 0 0 1 2-2h8l3 3h14v4H1z" fill="#e8a82a"/><rect x="1" y="8" width="28" height="20" rx="1" fill="#fbd66a"/><path d="M9 28V18h12v10z" fill="#3d8fd6"/><path d="M12 28v-6h6v6z" fill="#ffe79c"/></svg>
    </span>
    <span class="tapp">
      <svg viewBox="0 0 30 30"><rect x="8" y="1" width="21" height="28" rx="1" fill="#1f7a47"/><rect x="18" y="1" width="11" height="9" fill="#37c37f"/><rect x="18" y="10" width="11" height="10" fill="#22a161"/><rect x="8" y="20" width="21" height="9" fill="#125f35"/><rect x="1" y="8" width="14" height="14" fill="#0f6b3a"/><text x="4.500" y="19" class="tkl">X</text></svg>
    </span>
    <span class="tapp">
      <svg viewBox="0 0 30 30"><rect x="8" y="1" width="21" height="28" rx="1" fill="#2a6cc9"/><rect x="8" y="1" width="21" height="9" fill="#4f98e9"/><rect x="8" y="20" width="21" height="9" fill="#15469b"/><rect x="1" y="8" width="14" height="14" fill="#174fa8"/><text x="2.800" y="19" class="tkl">W</text></svg>
    </span>
    <span class="tapp run">
      <svg viewBox="0 0 30 30"><path d="M9 1h15q5 12-2 22L10 29H5Q0 18 4 9z" fill="#e9edf2"/><path d="M22 4q-16-2-15 10 1 7 9 5-6-1-5-6 1-6 11-9z" fill="#1b6fc2"/><path d="M9 25q16 2 15-10-1-7-9-5 6 1 5 6-1 6-11 9z" fill="#1b5fa8"/></svg>
    </span>
    <span class="tapp run active">
      <svg><use href="#appLogo"/></svg>
    </span>

    <div class="tray">
      <span class="help">?</span>
      <span class="ty chv"><svg viewBox="0 0 18 10"><path d="M1 9l8-8 8 8" fill="none" stroke="#fff" stroke-width="1.300"/></svg></span>
      <span class="ty"><svg viewBox="0 0 18 18"><path d="M2 16Q3 6 16 2M5.500 16Q6 9 16 6M9 16q.5-4 7-6" fill="none" stroke="#ccc" stroke-width="1.200"/><circle cx="15" cy="15" r="1.600" fill="#fff"/></svg></span>
      <span class="ty"><svg viewBox="0 0 22 22"><circle cx="11" cy="11" r="10" fill="#f3c715"/><path d="M1 11a10 10 0 0 0 10 10v-8z" fill="#2ea84f"/><path d="M11 1v8M7 5l4 4 4-4" stroke="#2ea84f" stroke-width="1.500" fill="none"/><rect x="9" y="10" width="13" height="10" rx="3" fill="#4d9be8"/><circle cx="13" cy="15" r="1" fill="#fff"/><circle cx="18" cy="15" r="1" fill="#fff"/></svg></span>
      <span class="ty"><svg viewBox="0 0 22 22"><circle cx="11" cy="11" r="10.500" fill="#c9ced4"/><circle cx="7.500" cy="11" r="3.500" fill="#f6d9c6"/><circle cx="14.500" cy="10" r="3.500" fill="#f6d9c6"/><path d="M4 9.500q3-5 7 0M11 8.500q3-5 7 0" fill="#333" stroke="#333"/><path d="M3 20q4-6 8 0zM10 20q4-7 9-1l-2 2z" fill="#e25b6f"/></svg></span>
      <span class="ty"><svg viewBox="0 0 22 16"><rect x="6" y="3" width="14" height="10" fill="none" stroke="#fff" stroke-width="1.200"/><rect x="6" y="3" width="14" height="3" fill="#fff"/><rect x="20" y="6" width="2" height="4" fill="#fff"/><path d="M3 1v5M1 6h4v2H3v6" fill="none" stroke="#fff"/></svg></span>
      <span class="ty"><svg viewBox="0 0 22 18"><path d="M2 6h4l5-4v14l-5-4H2z" fill="none" stroke="#ddd" stroke-width="1.100"/><path d="M14 6q2 3 0 6M17 3q4 6 0 12M20 1q4 8 0 16" fill="none" stroke="#777" stroke-width="1"/></svg></span>
      <span class="ty ime">英</span>
      <span class="pin">拼</span>
      <span class="clock"><span>0:18 周二</span><span>2022/12/6</span></span>
      <span class="notif">
        <svg viewBox="0 0 20 18"><path d="M0 0h20v14H6l-4 4v-4H0z" fill="#fff"/><path d="M4 4h12M4 7h12M4 10h9" stroke="#222"/></svg>
        <em class="nbadge">1</em>
      </span>
    </div>
  </div>
</div>
</body>
</html>
```

FILE: styles.css
```css
* { box-sizing: border-box; }
html, body { margin: 0; padding: 0; }
body {
  width: 1920px; height: 1080px; overflow: hidden;
  font-family: "Open Sans", "Noto Sans CJK SC", sans-serif;
  font-size: 15px; color: #333; background: #eceef0;
}
.defs { position: absolute; }
svg { display: block; flex: none; }
.app { display: flex; flex-direction: column; height: 1080px; }
.lat { font-size: 15.800px; line-height: 1; }

/* title bar */
.titlebar { height: 37px; background: #eceef0; display: flex; align-items: center; }
.quick { width: 486px; display: flex; align-items: center; gap: 6px; padding-left: 2px; }
.qlogo { width: 20px; height: 20px; margin-right: -2px; }
.qi { width: 22px; height: 22px; }
.qarrow { width: 10px; height: 10px; }
.qsep { width: 1px; height: 24px; background: #c6c8cb; }
.qcustom { width: 10px; height: 14px; }
.apptitle { width: 1000px; text-align: center; font-size: 15.500px; color: #3a3a3a; }
.winctl { margin-left: auto; display: flex; width: 190px; }
.wbtn { width: 63.300px; height: 37px; display: flex; align-items: center; justify-content: center; }
.wbtn svg { width: 14px; height: 18px; }

/* ribbon tabs */
.tabs { height: 33px; background: #fff; display: flex; position: relative; }
.tab { padding: 0 15px; line-height: 33px; color: #333; white-space: nowrap; }
.tab.file { background: #2b5797; color: #fff; width: 76px; padding: 0; text-align: center; }
.tab.active {
  color: #2b579a; height: 34px; background: #fafafa;
  border: 1px solid #b4b4b4; border-bottom: 0; padding: 0 14px; position: relative; z-index: 2; line-height: 31px;
}
.collapse { width: 12px; height: 12px; margin: 9px 7px 0 auto; }

/* ribbon */
.ribbon { height: 101px; background: #fafafa; border-top: 1px solid #d2d2d2; border-bottom: 2px solid #d6d6d6; display: flex; }
.grp { margin: 2px 0 0; height: 95px; border-right: 1px solid #dfe0e2; display: flex; flex-direction: column; justify-content: center; padding-top: 4px; flex: none; white-space: nowrap; }
.grp.dark { border-right-color: #9a9c9f; }
.g-sketch, .g-prim, .g-solid { flex-direction: row; justify-content: flex-start; padding-top: 10px; }
.g-sketch { width: 108px; padding-left: 4px; }
.g-prim { width: 186px; padding-left: 1px; }
.g-solid { width: 255px; padding-left: 5px; }
.g-blend { width: 73.500px; padding-left: 10px; }
.g-bool { width: 71px; padding-left: 8px; }
.g-fill { width: 87.500px; padding-left: 9px; }
.g-air { width: 86px; padding-left: 8px; }
.g-set { width: 103px; padding-left: 10px; }
.g-sec { width: 71.500px; padding-left: 8px; }
.g-meas { width: 102.500px; padding-left: 10px; }
.g-mark1 { width: 132px; padding-left: 9px; }
.g-mark2 { width: 130.500px; padding-left: 7px; }
.big { width: 45.300px; display: flex; flex-direction: column; align-items: center; white-space: nowrap; }
.big.wide { width: 104px; }
.g-solid .big { width: 46px; }
.g-solid .big.combo { width: 60px; margin-left: 1px; }
.bi { width: 38px; height: 38px; }
.big > span { line-height: 20px; margin-top: 8px; }
.drop { width: 10px; height: 6px; margin-top: 6px; }
.off { color: #8b8b8b; }
.sm { display: flex; align-items: center; gap: 4px; height: 32.300px; flex: none; white-space: nowrap; }
.si { width: 20px; height: 20px; }
.meter { margin: 15px 4px 0 auto; width: 11px; height: 74px; border-radius: 2px; background: #2a2f45; border: 1px solid #3f8fe0; box-shadow: 0 0 2px #5aa5ee, 0 4px 4px #ccc; padding-top: 11px; }
.meter-fill { height: 100%; background: linear-gradient(#0fae63, #3cc870); border-radius: 1px; }

/* main */
.work { height: 826px; display: flex; }
.dock { width: 576px; display: flex; flex-direction: column; background: #eceef0; flex: none; }
.dock-head { height: 33px; display: flex; align-items: center; padding: 0 16px 0 5px; gap: 16px; }
.dock-title { color: #888; flex: 1; margin-top: -7px; }
.dock-ic { width: 14px; height: 14px; }
.dock-tabs { height: 19px; display: flex; align-items: flex-end; }
.dtab { height: 19px; line-height: 20px; padding: 0 8px; }
.dtab.on { width: 46px; background: #fff; border: 1px solid #b4b6b9; border-bottom: 0; border-radius: 3px 3px 0 0; padding: 0 6px; line-height: 17px; margin-left: 1px; position: relative; top: 1px; z-index: 1; }
.tree { width: 567px; height: 360px; margin-left: 1px; background: #fff; border: 1px solid #b4b6b9; border-radius: 3px; position: relative; overflow: hidden; }
.row { height: 22px; display: flex; align-items: center; white-space: nowrap; }
.lv0 { padding-left: 28px; }
.lv1 { padding-left: 53px; }
.lv2 { padding-left: 78px; }
.lv3 { padding-left: 103px; }
.exp { width: 16px; height: 16px; flex: none; margin-right: 8px; position: relative; z-index: 1; }
.ti { width: 20px; height: 20px; margin-right: 6px; position: relative; z-index: 1; }
.lbl { line-height: 20px; }
.row b { font-weight: 700; color: #222; }
.guides { position: absolute; left: 0; top: 0; width: 567px; height: 360px; }
.tscroll { position: absolute; right: 2px; top: 0; width: 10px; height: 360px; }
.props { width: 567px; height: 385px; margin: 7px 0 0 1px; border: 1px solid #b4b6b9; border-top: 0; border-radius: 3px; flex: none; }
.props-head { height: 24px; background: #aeb2b5; display: flex; align-items: center; border-bottom: 1px solid #8d9194; border-radius: 3px 3px 0 0; }
.pcol { width: 125px; padding-left: 11px; border-right: 1px solid #94989b; line-height: 23px; }
.pcol2 { padding-left: 10px; }
.dock-bottom { height: 22px; width: 568px; background: #fff; display: flex; align-items: flex-end; padding-left: 6px; gap: 10px; }
.btab { line-height: 20px; height: 20px; }
.btab.on { background: #aeb2b5; border: 1px solid #909497; border-bottom: 0; width: 46px; text-align: center; line-height: 20px; height: 20px; }

.view { flex: 1; display: flex; flex-direction: column; min-width: 0; }
.toolbar { height: 36px; background: #fff; display: flex; align-items: center; border-bottom: 1px solid #9fa3a7; }
.tbg { display: flex; align-items: center; gap: 8px; }
.first { padding: 0 4px 0 2px; }
.pl9 { padding: 0 7px 0 9px; }
.pl5 { padding-left: 5px; }
.pr8 { padding-right: 8px; }
.pr4 { padding-right: 4px; }
.tb { width: 30px; height: 30px; }
.tb.hex { width: 36px; }
.tb.axes { width: 34px; }
.tchev { width: 8px; height: 8px; margin-left: -12px; }
.tsep { width: 1px; height: 30px; background: #c9cbce; flex: none; }
.axl { font: 700 9px "Liberation Sans", sans-serif; fill: #222; }

.canvas { flex: 1; position: relative; background: linear-gradient(176deg, #b9cde4 0%, #c6d5e7 30%, #d5dee9 62%, #e4e7ee 100%); overflow: hidden; }
.scene { position: absolute; left: 0; top: 0; width: 1344px; height: 769px; }
.face { fill: url(#mesh); }
.patch { fill: #366493; }
.wire { fill: none; stroke: #020202; stroke-width: 1.400; }
.darkface { fill: url(#meshDark); stroke: #020202; stroke-width: 1; }
.outline { fill: none; stroke: #020202; stroke-width: 2; }
.topface { fill: #000; }
.nut { fill: url(#fine); stroke: #000; stroke-width: 4.500; }
.stud { fill: url(#fineStud); stroke: #000; stroke-width: 1.500; }
.tx { font: 400 10px "Liberation Sans", sans-serif; }
.tz { fill: #0a14f0; font-size: 12px; }
.tyy { fill: #18a818; }
.tr { fill: #f01010; }
.tkl { font: 700 11px "Liberation Sans", sans-serif; fill: #fff; }

.doc-tabs { height: 20px; background: #eceef0; display: flex; }
.doc-tab { width: 124px; background: #fff; border: 1px solid #b4b6b9; border-bottom: 0; border-left: 0; display: flex; align-items: center; gap: 10px; white-space: nowrap; }
.doc-ic { width: 20px; height: 20px; }

/* status */
.status { height: 32px; background: #eceef0; border-top: 1px solid #a9abae; border-bottom: 1px solid #a9abae; display: flex; justify-content: space-between; align-items: center; padding: 0 2px 0 6px; white-space: nowrap; }
.status-l { color: #777; }
.status-r { color: #333; font-size: 15.800px; }

/* taskbar */
.taskbar { height: 51px; background: #1a1a1a; display: flex; align-items: center; position: relative; }
.tk { width: 60px; height: 51px; display: flex; align-items: center; justify-content: center; flex: none; }
.tk svg { width: 22px; height: 22px; }
.newsbox { width: 275px; height: 43px; background: #ececec; display: flex; align-items: center; flex: none; }
.ie { width: 24px; height: 26px; margin-left: 7px; }
.ie-up { width: 7px; height: 5px; margin-left: 5px; }
.news { color: #111; margin-left: 8px; width: 158px; white-space: nowrap; }
.newsbtn { margin-left: auto; width: 70px; height: 43px; background: #1e88f5; color: #fff; text-align: center; line-height: 43px; }
.tksep { width: 3px; height: 26px; border-left: 1px solid #555; border-right: 1px solid #555; margin: 0 13px 0 9px; flex: none; }
.tapp { width: 62.300px; height: 51px; display: flex; align-items: center; justify-content: center; position: relative; flex: none; }
.tapp svg { width: 30px; height: 30px; }
.tapp.run::after { content: ""; position: absolute; left: 5px; right: 5px; bottom: 0; height: 2px; background: #76b9ed; }
.tapp.active { background: #444; }
.tapp.active::after { left: 0; right: 0; }
.tray { margin-left: auto; display: flex; align-items: center; color: #fff; padding-right: 26px; }
.help { width: 26px; height: 26px; border-radius: 50%; background: #1b84d8; border: 2px solid #fff; color: #fff; font: 700 19px/22px "Open Sans", sans-serif; text-align: center; margin-right: 6px; }
.ty { width: 30px; height: 30px; display: flex; align-items: center; justify-content: center; }
.ty svg { width: 20px; height: 20px; }
.ty.chv svg { width: 16px; height: 10px; }
.ty.ime { font-size: 20px; color: #fff; }
.pin { width: 18px; height: 18px; margin: 0 10px 0 14px; background: #fff; color: #000; line-height: 18px; text-align: center; }
.clock { width: 100px; margin: -2px 9px 0 5px; display: flex; flex-direction: column; align-items: center; font-size: 15.600px; line-height: 20px; white-space: nowrap; }
.notif { width: 30px; height: 30px; position: relative; display: flex; justify-content: center; }
.notif svg { width: 20px; height: 18px; margin-top: 4px; }
.nbadge { position: absolute; left: 13px; top: 12px; width: 20px; height: 20px; border-radius: 50%; background: #3a3a3a; border: 1px solid #999; font: 700 13px/18px "Open Sans", sans-serif; text-align: center; color: #fff; }
```
